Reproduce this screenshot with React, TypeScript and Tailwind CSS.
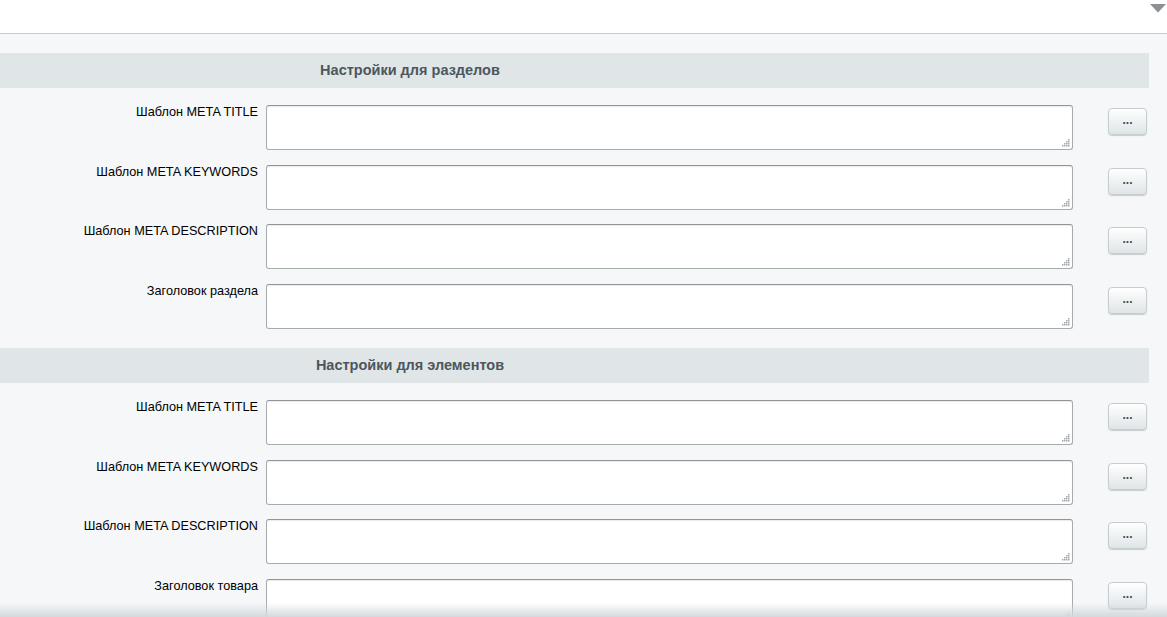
import React from "react"

type Row = { label: string }

const sections: { title: string; rows: Row[] }[] = [
  {
    title: "Настройки для разделов",
    rows: [
      { label: "Шаблон META TITLE" },
      { label: "Шаблон META KEYWORDS" },
      { label: "Шаблон META DESCRIPTION" },
      { label: "Заголовок раздела" },
    ],
  },
  {
    title: "Настройки для элементов",
    rows: [
      { label: "Шаблон META TITLE" },
      { label: "Шаблон META KEYWORDS" },
      { label: "Шаблон META DESCRIPTION" },
      { label: "Заголовок товара" },
    ],
  },
]

function Grip() {
  // dotted resize corner
  const dots = [
    [6, 0],
    [4, 2],
    [6, 2],
    [2, 4],
    [4, 4],
    [6, 4],
    [0, 6],
    [2, 6],
    [4, 6],
    [6, 6],
  ]
  return (
    <svg className="pointer-events-none absolute bottom-[3px] right-[3px]" width="8" height="8" viewBox="0 0 8 8">
      {dots.map(([x, y], i) => (
        <rect key={i} x={x} y={y} width="1.5" height="1.5" fill="#a3a9ac" />
      ))}
    </svg>
  )
}

function FieldRow({ label }: Row) {
  return (
    <div className="flex h-[59.67px] items-start">
      <div className="mt-[-1px] w-[258px] shrink-0 text-right text-[12.7px] leading-[16px] text-black">
        {label}
      </div>
      <div className="relative ml-[8px] h-[45px] w-[807px] shrink-0">
        <textarea className="block h-[45px] w-[807px] resize-none rounded-[3px] border border-[#a6abae] border-t-[#8f9598] bg-white shadow-[inset_0_1px_1px_rgba(0,0,0,0.08)] outline-none" />
        <Grip />
      </div>
      <button className="ml-[35px] mt-[3px] flex h-[27px] w-[39px] items-center justify-center rounded-[4px] border border-[#c6cdd0] bg-gradient-to-b from-white to-[#dfe5e7] pb-[3px] text-[12px] font-bold leading-none text-[#3f4b52] shadow-[0_1px_1px_rgba(0,0,0,0.18)]">
        ...
      </button>
    </div>
  )
}

export default function App() {
  return (
    <div className="relative h-[617px] w-[1167px] overflow-hidden bg-[#f5f7f8] font-['Liberation_Sans',Arial,sans-serif]">
      {/* top bar */}
      <div className="relative h-[34px] border-b border-[#c7cccf] bg-white">
        <svg className="absolute right-[1px] top-[4px]" width="16" height="9" viewBox="0 0 16 9">
          <path d="M0 0 H16 L8 8.5 Z" fill="#8d9194" />
        </svg>
      </div>

      <div className="w-[1149px] pt-[19px]">
        {sections.map((s, i) => (
          <div key={i} className={i > 0 ? "mt-[4.33px]" : ""}>
            <div className="flex h-[35px] items-center bg-[#e0e6e7]">
              <div className="w-[820px] text-center text-[14.5px] font-bold text-[#4b575d]">{s.title}</div>
            </div>
            <div className="pt-[17px]">
              {s.rows.map((r, j) => (
                <FieldRow key={j} label={r.label} />
              ))}
            </div>
          </div>
        ))}
      </div>

      {/* bottom fade */}
      <div className="pointer-events-none absolute bottom-0 left-0 right-0 h-[14px] bg-gradient-to-b from-transparent to-[#d3d9dc]" />
    </div>
  )
}
